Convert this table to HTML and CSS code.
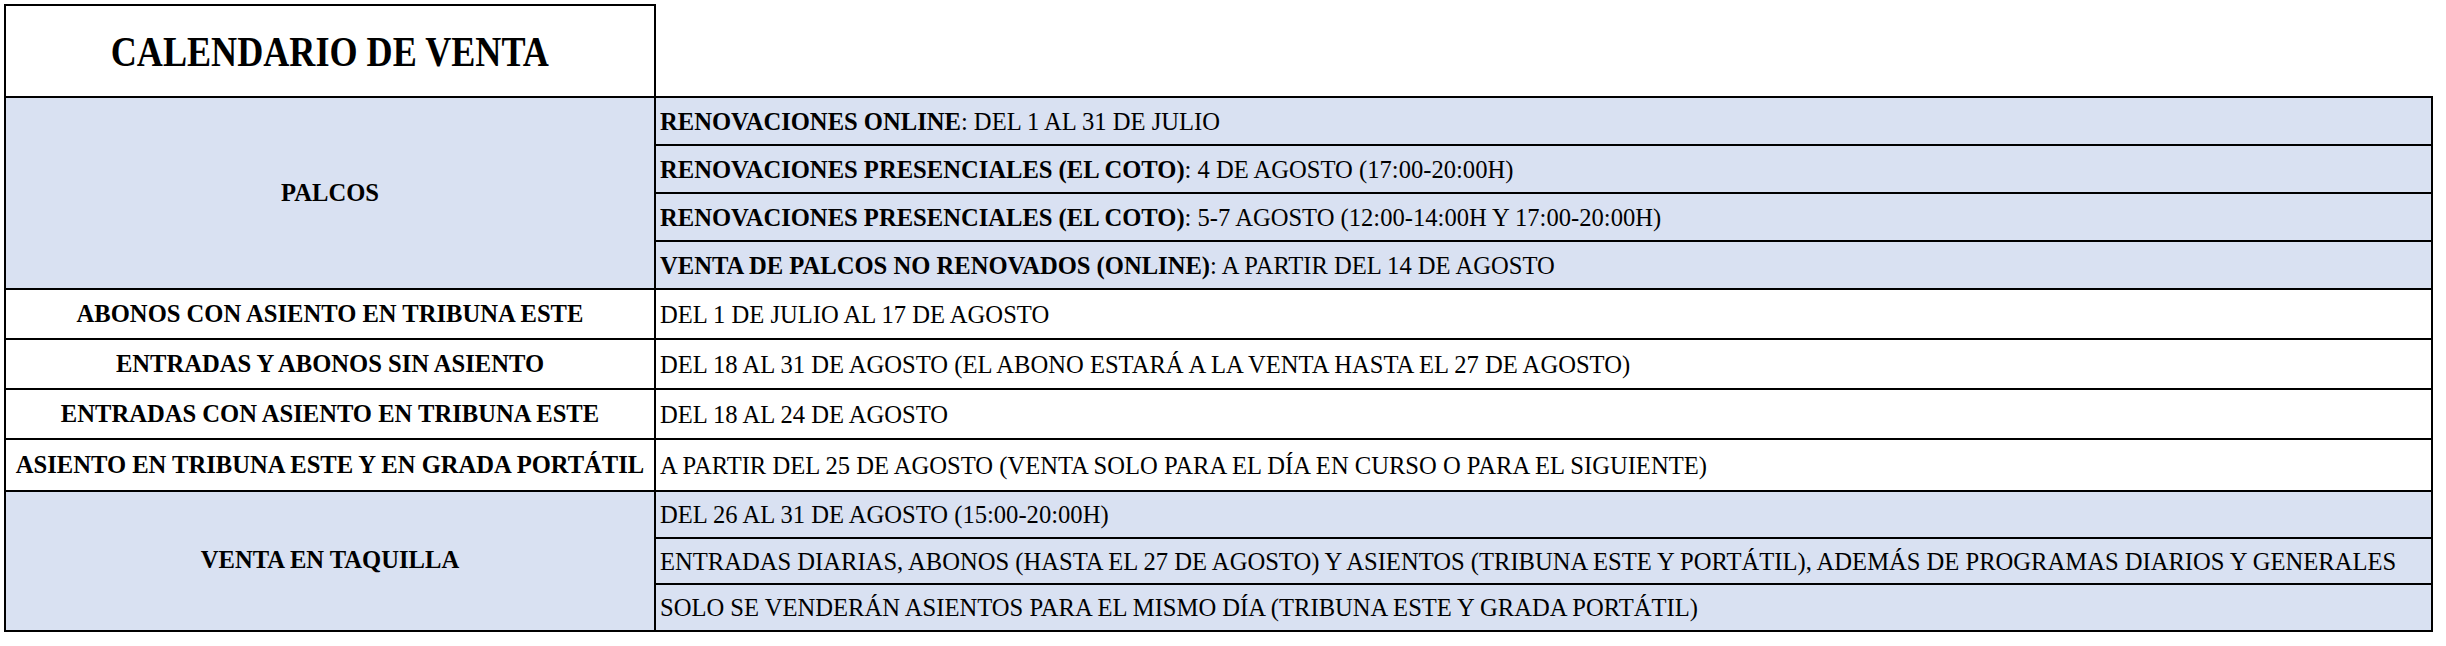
FILE: index.html
```html
<!DOCTYPE html>
<html lang="es">
<head>
<meta charset="utf-8">
<title>Calendario de venta</title>
<link rel="stylesheet" href="styles.css">
</head>
<body>
<table class="cal">
  <colgroup><col class="c1"><col class="c2"></colgroup>
  <tr class="r-title">
    <td class="title"><span class="title-text">CALENDARIO DE VENTA</span></td>
    <td class="blank"></td>
  </tr>
  <tr class="r-sub">
    <td class="label blue" rowspan="4">PALCOS</td>
    <td class="info blue"><b>RENOVACIONES ONLINE</b>: DEL 1 AL 31 DE JULIO</td>
  </tr>
  <tr class="r-sub">
    <td class="info blue"><b>RENOVACIONES PRESENCIALES (EL COTO)</b>: 4 DE AGOSTO (17:00-20:00H)</td>
  </tr>
  <tr class="r-sub">
    <td class="info blue"><b>RENOVACIONES PRESENCIALES (EL COTO)</b>: 5-7 AGOSTO (12:00-14:00H Y 17:00-20:00H)</td>
  </tr>
  <tr class="r-sub">
    <td class="info blue"><b>VENTA DE PALCOS NO RENOVADOS (ONLINE)</b>: A PARTIR DEL 14 DE AGOSTO</td>
  </tr>
  <tr class="r-main">
    <td class="label">ABONOS CON ASIENTO EN TRIBUNA ESTE</td>
    <td class="info">DEL 1 DE JULIO AL 17 DE AGOSTO</td>
  </tr>
  <tr class="r-main">
    <td class="label">ENTRADAS Y ABONOS SIN ASIENTO</td>
    <td class="info">DEL 18 AL 31 DE AGOSTO (EL ABONO ESTARÁ A LA VENTA HASTA EL 27 DE AGOSTO)</td>
  </tr>
  <tr class="r-main">
    <td class="label">ENTRADAS CON ASIENTO EN TRIBUNA ESTE</td>
    <td class="info">DEL 18 AL 24 DE AGOSTO</td>
  </tr>
  <tr class="r-main r-tall">
    <td class="label">ASIENTO EN TRIBUNA ESTE Y EN GRADA PORTÁTIL</td>
    <td class="info">A PARTIR DEL 25 DE AGOSTO (VENTA SOLO PARA EL DÍA EN CURSO O PARA EL SIGUIENTE)</td>
  </tr>
  <tr class="r-taq">
    <td class="label blue" rowspan="3">VENTA EN TAQUILLA</td>
    <td class="info blue">DEL 26 AL 31 DE AGOSTO (15:00-20:00H)</td>
  </tr>
  <tr class="r-taq">
    <td class="info blue">ENTRADAS DIARIAS, ABONOS (HASTA EL 27 DE AGOSTO) Y ASIENTOS (TRIBUNA ESTE Y PORTÁTIL), ADEMÁS DE PROGRAMAS DIARIOS Y GENERALES</td>
  </tr>
  <tr class="r-taq">
    <td class="info blue">SOLO SE VENDERÁN ASIENTOS PARA EL MISMO DÍA (TRIBUNA ESTE Y GRADA PORTÁTIL)</td>
  </tr>
</table>
</body>
</html>
```

FILE: styles.css
```css
html, body {
  margin: 0;
  padding: 0;
  background: #ffffff;
}

body {
  padding: 4px;
  font-family: "Liberation Serif", "Times New Roman", serif;
  color: #000000;
}

.cal {
  border-collapse: collapse;
  table-layout: fixed;
  width: 2427px;
}

.c1 { width: 650px; }
.c2 { width: 1777px; }

.cal td {
  border: 2px solid #000000;
  padding: 0 4px;
  font-size: 24.6px;
  line-height: 1;
  white-space: nowrap;
  vertical-align: middle;
}

.cal td.info {
  padding-top: 3px;
}

.cal td.blank {
  border-top: none;
  border-right: none;
}

.cal .title {
  text-align: center;
  font-weight: bold;
  font-size: 43px;
}

.title-text {
  display: inline-block;
  transform: scaleX(0.84);
}

.r-title { height: 92px; }
.r-sub { height: 48px; }
.r-main { height: 50px; }
.r-tall { height: 52px; }
.r-taq { height: 46.5px; }

.label {
  text-align: center;
  font-weight: bold;
}

.info {
  text-align: left;
}

.blue {
  background: #d9e1f2;
}
```
